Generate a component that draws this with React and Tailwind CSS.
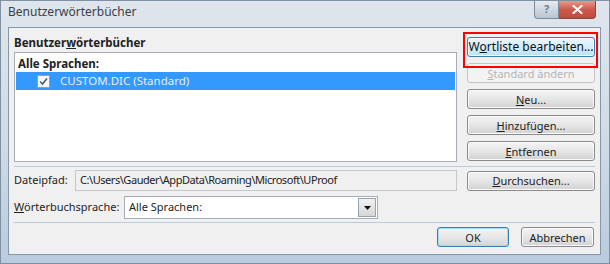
import React from "react";

const font = { fontFamily: '"Noto Sans", "Open Sans", sans-serif' };

function Btn({ children, variant = "normal", className = "" }) {
  const base =
    "h-[20px] flex items-center justify-center rounded-[3px] border text-[11px] leading-none";
  const styles = {
    normal:
      "border-[#8a8a8a] bg-gradient-to-b from-[#f4f4f4] via-[#e6e6e6] to-[#d2d2d2] text-[#222] shadow-[inset_0_0_0_1px_#fbfbfb]",
    hot: "border-[#3c7fb1] bg-gradient-to-b from-[#eaf6fd] via-[#d5eefc] to-[#b8e1f8] text-[#111] shadow-[inset_0_0_0_1px_#f4fbff]",
    def: "border-[#3c7fb1] bg-gradient-to-b from-[#f4f4f4] via-[#e8e8e8] to-[#d4d4d4] text-[#222] shadow-[inset_0_0_0_1px_#9fdcf5]",
    disabled: "border-[#c2c6ca] bg-[#f3f3f3] text-[#b5b5b5]",
  };
  return <div className={`${base} ${styles[variant]} ${className}`}>{children}</div>;
}

export default function App() {
  return (
    <div
      className="w-[610px] h-[264px] relative overflow-hidden bg-gradient-to-b from-[#dfe5ec] via-[#d2dce6] to-[#b9cbdd] border border-[#7f90a3]"
      style={font}
    >
      {/* title bar */}
      <div className="h-[26px] flex items-start justify-between">
        <div className="pl-[7px] pt-[5px] text-[12px] text-[#3a3f46] leading-none">
          Benutzerwörterbücher
        </div>
        <div className="flex mr-[13px]">
          <div className="w-[25px] h-[18px] rounded-bl-[4px] border border-t-0 border-[#7c8a99] bg-gradient-to-b from-[#e6ebf0] to-[#b9c5d1] flex items-center justify-center text-[11px] font-bold text-[#6f7c88]">
            ?
          </div>
          <div className="w-[37px] h-[18px] rounded-br-[4px] border border-l-0 border-t-0 border-[#7c4a4a] bg-gradient-to-b from-[#e29a8f] via-[#cc5a4c] to-[#c24a3c] flex items-center justify-center">
            <svg width="11" height="9" viewBox="0 0 11 9">
              <path d="M1.5 1 L9.5 8 M9.5 1 L1.5 8" stroke="#fff" strokeWidth="2.2" strokeLinecap="round" />
            </svg>
          </div>
        </div>
      </div>

      {/* client area */}
      <div className="absolute left-[7px] right-[8px] top-[26px] bottom-[8px] bg-[#f0f0f0] border border-[#8597ab] px-[5px] text-[#1e1e1e]">
        <div className="flex gap-[10px]">
          {/* left column */}
          <div className="w-[443px] flex flex-col">
            <div className="h-[24px] pt-[9px] text-[11.5px] font-bold leading-none text-[#222]">
              Benutzer<span className="underline">w</span>örterbücher
            </div>
            <div className="h-[110px] bg-white border border-[#a5acb5] px-[1px] pt-[3px]">
              <div className="h-[16px] pl-[2px] text-[11.5px] font-bold leading-[16px] text-[#222]">
                Alle Sprachen:
              </div>
              <div className="h-[18px] bg-[#3399ff] flex items-center">
                <div className="ml-[21px] w-[13px] h-[13px] border border-[#8f9fb1] bg-[#f4f6f9] flex items-center justify-center">
                  <svg width="9" height="9" viewBox="0 0 9 9">
                    <path d="M1 4.5 L3.5 7 L8 1.5" stroke="#4a5a70" strokeWidth="1.6" fill="none" />
                  </svg>
                </div>
                <span className="ml-[10px] text-[11.5px] text-[#e6eeff]">CUSTOM.DIC (Standard)</span>
              </div>
            </div>
          </div>
          {/* right column */}
          <div className="w-[128px] relative pt-[9px] flex flex-col gap-[6px]">
            <Btn variant="hot" className="text-[12px]">
              W<span className="underline">o</span>rtliste bearbeiten...
            </Btn>
            <Btn variant="disabled">
              <span className="underline">S</span>tandard ändern
            </Btn>
            <Btn>
              <span className="underline">N</span>eu...
            </Btn>
            <Btn>
              <span className="underline">H</span>inzufügen...
            </Btn>
            <Btn>
              <span className="underline">E</span>ntfernen
            </Btn>
            <div className="absolute left-[-4px] right-[-3px] top-[4px] h-[36px] border-2 border-[#ff0000]" />
          </div>
        </div>

        <div className="mt-[4px] h-[1px] bg-[#b9cbe0]" />

        <div className="mt-[3px] flex items-center">
          <div className="w-[61px] text-[11px]">Dateipfad:</div>
          <div className="w-[382px] h-[21px] border border-[#c5c9cd] bg-[#f0f0f0] flex items-center px-[4px] text-[11px] tracking-[-0.45px] text-[#222]">
            C:\Users\Gauder\AppData\Roaming\Microsoft\UProof
          </div>
          <Btn className="ml-[10px] w-[128px]">
            <span className="underline">D</span>urchsuchen...
          </Btn>
        </div>

        <div className="mt-[5px] flex items-center">
          <div className="w-[110px] text-[11px]">
            <span className="underline">W</span>örterbuchsprache:
          </div>
          <div className="w-[254px] h-[23px] border border-[#a5acb5] bg-white flex items-center justify-between">
            <span className="pl-[4px] text-[11px]">Alle Sprachen:</span>
            <div className="w-[18px] h-[19px] mr-[1px] border border-[#9aa2ab] bg-gradient-to-b from-[#f2f2f2] to-[#d6d6d6] flex items-center justify-center">
              <svg width="7" height="4" viewBox="0 0 7 4">
                <path d="M0 0 L7 0 L3.5 4 Z" fill="#111" />
              </svg>
            </div>
          </div>
        </div>

        <div className="mt-[3px] h-[1px] bg-[#b9cbe0]" />

        <div className="mt-[4px] flex justify-end gap-[12px] pr-[1px]">
          <Btn variant="def" className="w-[72px]">OK</Btn>
          <Btn className="w-[73px]">Abbrechen</Btn>
        </div>
      </div>
    </div>
  );
}
